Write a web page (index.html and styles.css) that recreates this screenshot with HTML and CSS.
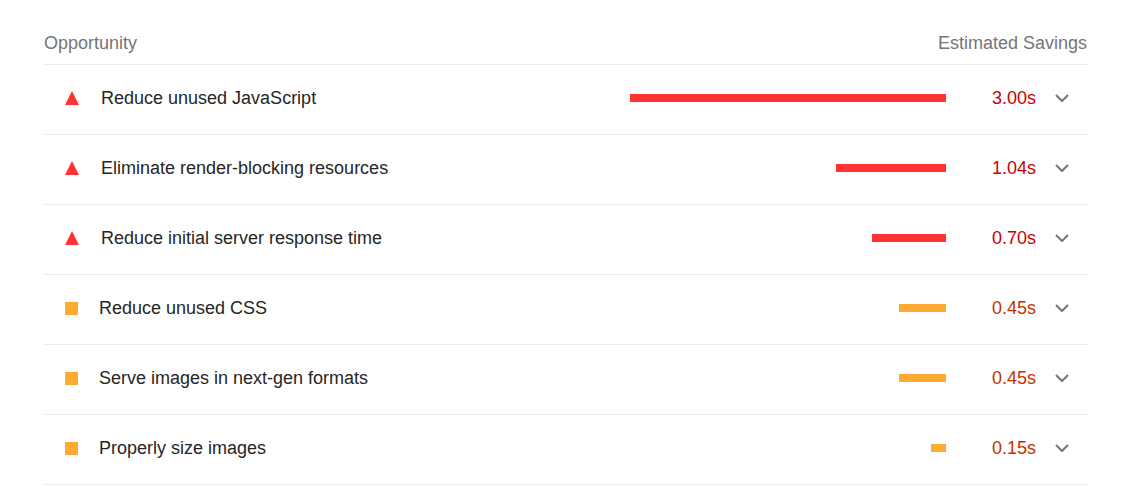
FILE: index.html
```html
<!DOCTYPE html>
<html lang="en">
<head>
  <meta charset="UTF-8" />
  <title>Opportunities</title>
  <link rel="stylesheet" href="styles.css">
</head>
<body>
  <div class="audits">
    <div class="audits-header">
      <span>Opportunity</span>
      <span>Estimated Savings</span>
    </div>

    <!-- fail -->
    <div class="audit fail">
      <span class="icon"></span>
      <span class="title">Reduce unused JavaScript</span>
      <div class="track"><div class="bar" style="width: 100%"></div></div>
      <span class="value">3.00s</span>
      <span class="chevron"><svg width="14" height="8" viewBox="0 0 14 8"><polyline points="1,1 7,7 13,1" /></svg></span>
    </div>
    <div class="audit fail">
      <span class="icon"></span>
      <span class="title">Eliminate render-blocking resources</span>
      <div class="track"><div class="bar" style="width: 34.7%"></div></div>
      <span class="value">1.04s</span>
      <span class="chevron"><svg width="14" height="8" viewBox="0 0 14 8"><polyline points="1,1 7,7 13,1" /></svg></span>
    </div>
    <div class="audit fail">
      <span class="icon"></span>
      <span class="title">Reduce initial server response time</span>
      <div class="track"><div class="bar" style="width: 23.3%"></div></div>
      <span class="value">0.70s</span>
      <span class="chevron"><svg width="14" height="8" viewBox="0 0 14 8"><polyline points="1,1 7,7 13,1" /></svg></span>
    </div>

    <!-- average -->
    <div class="audit average">
      <span class="icon"></span>
      <span class="title">Reduce unused CSS</span>
      <div class="track"><div class="bar" style="width: 15%"></div></div>
      <span class="value">0.45s</span>
      <span class="chevron"><svg width="14" height="8" viewBox="0 0 14 8"><polyline points="1,1 7,7 13,1" /></svg></span>
    </div>
    <div class="audit average">
      <span class="icon"></span>
      <span class="title">Serve images in next-gen formats</span>
      <div class="track"><div class="bar" style="width: 15%"></div></div>
      <span class="value">0.45s</span>
      <span class="chevron"><svg width="14" height="8" viewBox="0 0 14 8"><polyline points="1,1 7,7 13,1" /></svg></span>
    </div>
    <div class="audit average">
      <span class="icon"></span>
      <span class="title">Properly size images</span>
      <div class="track"><div class="bar" style="width: 4.8%"></div></div>
      <span class="value">0.15s</span>
      <span class="chevron"><svg width="14" height="8" viewBox="0 0 14 8"><polyline points="1,1 7,7 13,1" /></svg></span>
    </div>
  </div>
</body>
</html>
```

FILE: styles.css
```css
body {
  font-family: 'Liberation Sans', Arial, Helvetica, sans-serif;
  margin: 0;
  background: #fff;
  color: #212121;
}
.audits {
  margin: 0 46px 0 44px;
  padding-top: 33px;
}
.audits-header {
  display: flex;
  justify-content: space-between;
  font-size: 18px;
  line-height: 21px;
  color: #757575;
  padding: 0 1px 10px 0;
  border-bottom: 1px solid #ebebeb;
}
.audit {
  display: flex;
  align-items: center;
  height: 66px;
  padding-bottom: 3px;
  border-bottom: 1px solid #ebebeb;
  font-size: 18px;
}
.icon {
  flex: none;
}
.fail .icon {
  width: 0;
  height: 0;
  margin: 0 22px 0 21px;
  border-left: 7px solid transparent;
  border-right: 7px solid transparent;
  border-bottom: 14px solid #ff3333;
}
.average .icon {
  width: 13px;
  height: 13px;
  margin: 0 21px 0 21px;
  background: #ffaa33;
}
.title {
  flex: 1;
  color: #262626;
}
.track {
  width: 316px;
  display: flex;
  justify-content: flex-end;
}
.bar {
  height: 8px;
}
.fail .bar {
  background: #ff3333;
}
.average .bar {
  background: #ffaa33;
}
.value {
  width: 90px;
  text-align: right;
}
.fail .value {
  color: #cc0000;
}
.average .value {
  color: #c33300;
}
.chevron {
  width: 24px;
  margin: 0 14px 0 14px;
  display: flex;
  justify-content: center;
}
.chevron polyline {
  fill: none;
  stroke: #757575;
  stroke-width: 2;
}
```
